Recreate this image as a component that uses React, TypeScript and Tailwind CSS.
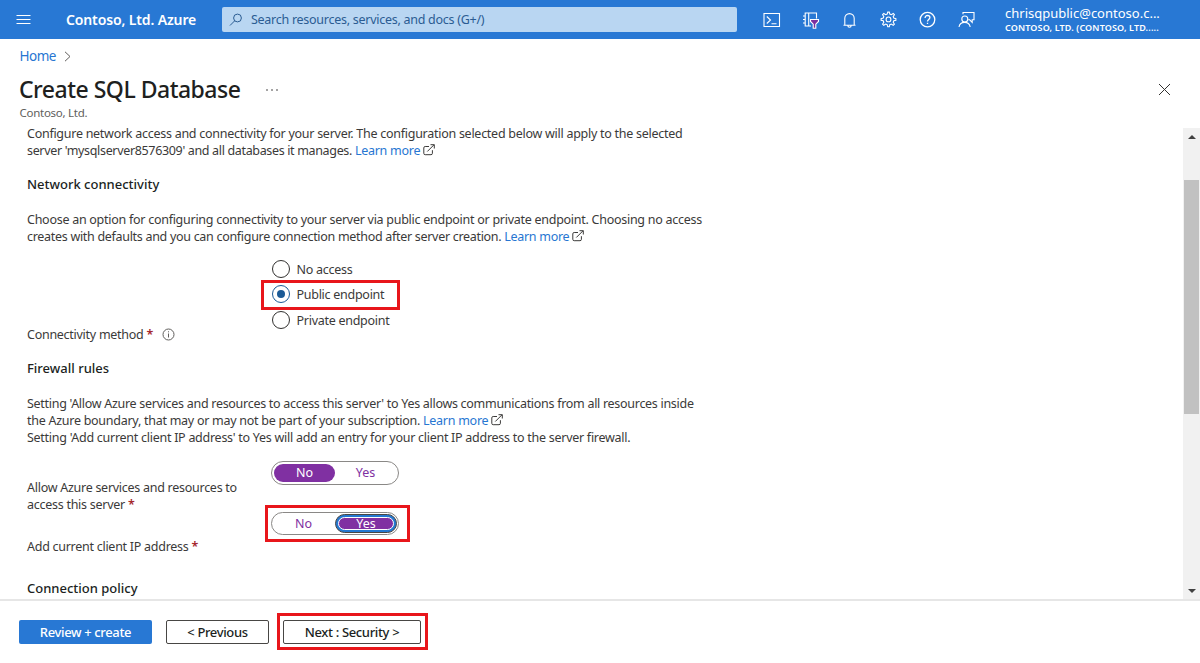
import React from "react";

const RED = "pointer-events-none absolute border-[3px] border-[#e8161b]";

function External() {
  return (
    <svg className="ml-[3px] inline-block h-3 w-3 align-[-1px]" viewBox="0 0 12 12" fill="none" stroke="#3b3a39" strokeWidth="1">
      <path d="M6 2.500H2.200Q.8 2.500.8 3.900v5.400q0 1.400 1.400 1.400H8q1.400 0 1.400-1.400V6.200M4.300 7.500L11 .8M7.500.7H11.300V4.500" />
    </svg>
  );
}

function Learn() {
  return (
    <>
      <a className="text-[#2776d2]">Learn more</a>
      <External />
    </>
  );
}

function Star() {
  return <span className="font-semibold text-[#a4262c]">*</span>;
}

function Radio({ label, checked = false }: { label: string; checked?: boolean }) {
  return (
    <div className="flex h-[25.300px] items-center">
      <span className={checked ? "flex h-[18px] w-[18px] items-center justify-center rounded-full border border-[#1b5a96]" : "h-[18px] w-[18px] rounded-full border border-[#323130]"}>
        {checked && <span className="h-2 w-2 rounded-full bg-[#1b5a96]" />}
      </span>
      <span className="ml-[7px] pt-px">{label}</span>
    </div>
  );
}

function TopIcons() {
  return (
    <div className="flex items-center gap-[19px] text-white">
      <svg className="h-5 w-5" viewBox="0 0 20 20" fill="none" stroke="currentColor" strokeWidth="1.100">
        <path d="M2 3.500h15.500v13H2zM4.800 6.500l3.700 3.500-3.700 3.500M9.500 13.800h5" />
      </svg>
      <svg className="h-5 w-5" viewBox="0 0 20 20" fill="none" stroke="currentColor" strokeWidth="1.100">
        <path d="M10 16H4.200V3H15.500v5.500M7.700 3v13M2 6h2.500M2 9.500h2.500M2 13h2.500" />
        <path d="M9.500 9.500h8v2l-2.700 2.700v4h-2.600v-4L9.500 11.500z" fill="#7b2f9f" />
      </svg>
      <svg className="h-5 w-5" viewBox="0 0 20 20" fill="none" stroke="currentColor" strokeWidth="1.100">
        <path d="M4.800 15V8.300a4.700 4.700 0 0 1 9.400 0V15M3.500 15.200h12M7.800 15.500a1.700 1.700 0 0 0 3.400 0" />
      </svg>
      <svg className="h-5 w-5" viewBox="0 0 20 20" fill="none" stroke="currentColor" strokeWidth="1.100">
        <path d="M8.700 2.100h1.600l.5 2 1.500.6 1.900-1.200 1.200 1.200-1.200 1.900.6 1.500 2.100.5v1.600l-2.100.5-.6 1.500 1.200 1.900-1.200 1.200-1.900-1.200-1.500.6-.5 2H8.700l-.5-2-1.500-.6-1.900 1.200-1.200-1.200 1.200-1.900-.6-1.500-2.100-.5V8.600l2.100-.5.6-1.500-1.200-1.900 1.200-1.200 1.900 1.200 1.500-.6z" />
        <circle cx="9.500" cy="9.400" r="2.400" />
      </svg>
      <svg className="h-5 w-5" viewBox="0 0 20 20" fill="none" stroke="currentColor" strokeWidth="1.300">
        <circle cx="9.500" cy="9.600" r="7.300" />
        <path d="M7.100 7.900c0-1.500 1-2.400 2.400-2.400s2.400.9 2.400 2.100c0 1.800-2.400 1.900-2.400 3.900M9.500 12.800v1.300" />
      </svg>
      <svg className="h-5 w-5" viewBox="0 0 20 20" fill="none" stroke="currentColor" strokeWidth="1.100">
        <circle cx="7.800" cy="9" r="3" />
        <path d="M2 17a5.700 5.700 0 0 1 11.200 0M6 4.300V2.500h11v7.300h-1.800v2.500l-2.500-2.500h-1.500" />
      </svg>
    </div>
  );
}

export default function App() {
  return (
    <div className="flex h-[663px] w-[1200px] flex-col overflow-hidden bg-white font-['Noto_Sans','Open_Sans',sans-serif] text-[12.500px] leading-[17px] tracking-[-0.270px] whitespace-nowrap text-[#3b3a39]">
      <header className="flex h-[39px] shrink-0 items-center bg-[#2878d4] text-white">
        <svg className="ml-4 h-[14px] w-[15px]" viewBox="0 0 15 14" stroke="white" strokeWidth="1">
          <path d="M.5 2.500h14M.5 6.500h14M.5 10.500h14" />
        </svg>
        <span className="ml-[35px] w-[156px] text-[14px] font-semibold tracking-[-0.130px]">Contoso, Ltd. Azure</span>
        <div className="flex h-[25px] w-[515px] items-center rounded-[2px] bg-[#b9d6f2] text-[#2b5c92]">
          <svg className="ml-[7px] h-[14px] w-[14px]" viewBox="0 0 14 14" fill="none" stroke="currentColor">
            <circle cx="8.500" cy="5" r="3.900" />
            <path d="M5.700 7.800L1 12.500" />
          </svg>
          <span className="ml-2">Search resources, services, and docs (G+/)</span>
        </div>
        <div className="ml-[25px]">
          <TopIcons />
        </div>
        <div className="ml-[28px] tracking-normal">
          <div className="text-[13px] leading-[16px]">chrisqpublic@contoso.c...</div>
          <div className="text-[9px] leading-[13px] font-semibold tracking-[0.150px]">CONTOSO, LTD. (CONTOSO, LTD.....</div>
        </div>
      </header>

      <nav className="flex h-[35px] shrink-0 items-center pl-[19.500px] text-[13.500px] text-[#2776d2]">
        <span className="w-[36px] tracking-[-0.500px]">Home</span>
        <svg className="ml-2 h-[11px] w-[7px]" viewBox="0 0 7 11" fill="none" stroke="#605e5c">
          <path d="M1 .8l5 4.700-5 4.700" />
        </svg>
      </nav>
      <div className="flex h-[31px] shrink-0 items-center pl-[19px] text-[#201f1e]">
        <h1 className="w-[247px] text-[23px] font-medium tracking-[-0.500px]">Create SQL Database</h1>
        <svg className="h-1 w-3" viewBox="0 0 12 4" fill="#323130">
          <circle cx="1" cy="2" r=".8" /><circle cx="6" cy="2" r=".8" /><circle cx="11" cy="2" r=".8" />
        </svg>
        <svg className="ml-[880px] h-[13px] w-[13px]" viewBox="0 0 13 13" stroke="#323130" strokeWidth="1">
          <path d="M1 1l11 11M12 1L1 12" />
        </svg>
      </div>
      <div className="h-[20px] shrink-0 pl-[19.500px] text-[11.500px] leading-[16px] text-[#605e5c]">Contoso, Ltd.</div>

      <div className="flex h-[476px] shrink-0 border-b-2 border-[#e6e6e6]">
        <main className="w-[1183px] overflow-hidden pl-[27px]">
          <p className="w-max">Configure network access and connectivity for your server. The configuration selected below will apply to the selected</p>
          <p className="w-max"><span className="tracking-[-0.340px]">server 'mysqlserver8576309' and all databases it manages. </span><Learn /></p>
          <h2 className="mt-[17px] w-max text-[13px] font-medium tracking-normal text-[#201f1e]">Network connectivity</h2>
          <p className="mt-[18px] w-max">Choose an option for configuring connectivity to your server via public endpoint or private endpoint. Choosing no access</p>
          <p className="w-max tracking-[-0.300px]">creates with defaults and you can configure connection method after server creation. <Learn /></p>

          <div className="mt-[12px] flex h-[86px] items-start">
            <div className="flex h-full w-[244.500px] items-end">
              Connectivity method&nbsp;<Star />
              <svg className="mb-[2px] ml-[9px] h-[13px] w-[13px]" viewBox="0 0 13 13" fill="none" stroke="#605e5c">
                <circle cx="6.500" cy="6.500" r="5.500" />
                <path d="M6.500 5.500v4M6.500 3.300v1" />
              </svg>
            </div>
            <div className="relative -mt-[0.500px]">
              <Radio label="No access" />
              <Radio label="Public endpoint" checked />
              <Radio label="Private endpoint" />
              <span className={`${RED} top-[23.500px] left-[-10.500px] h-[30px] w-[139px]`} />
            </div>
          </div>

          <h2 className="mt-[17px] w-max text-[13px] font-medium tracking-normal text-[#201f1e]">Firewall rules</h2>
          <p className="mt-[18px] w-max tracking-[-0.290px]">Setting 'Allow Azure services and resources to access this server' to Yes allows communications from all resources inside</p>
          <p className="w-max">the Azure boundary, that may or may not be part of your subscription. <Learn /></p>
          <p className="w-max">Setting 'Add current client IP address' to Yes will add an entry for your client IP address to the server firewall.</p>

          <div className="mt-[15px] flex h-[51px]">
            <div className="w-[244px] pt-[18px]">
              <p>Allow Azure services and resources to</p>
              <p>access this server <Star /></p>
            </div>
            <div className="flex h-6 w-[128px] rounded-full border border-[#8a8886] p-[2px] text-center leading-[18px] tracking-normal">
              <span className="w-[61px] rounded-full bg-[#8030a2] text-white">No</span>
              <span className="flex-1 text-[#8030a2]">Yes</span>
            </div>
          </div>
          <div className="flex h-[43px]">
            <div className="w-[244px] pt-[26px]">Add current client IP address <Star /></div>
            <div className="relative h-6">
              <div className="flex h-[23px] w-[128px] items-center rounded-full border border-[#8a8886] pr-px text-center leading-[18px] tracking-normal">
                <span className="w-[63px] text-[#8030a2]">No</span>
                <span className="flex h-[19px] w-[62px] items-center rounded-full border border-[#484644] bg-[#2478d0] p-[2px]">
                  <span className="flex h-full w-full items-center justify-center rounded-full border border-white bg-[#8030a2] text-white">Yes</span>
                </span>
              </div>
              <span className={`${RED} top-[-7px] left-[-6px] h-[37px] w-[145px]`} />
            </div>
          </div>
          <h2 className="mt-[25px] w-max text-[13px] font-medium tracking-normal text-[#201f1e]">Connection policy</h2>
        </main>
        <div className="mt-[3px] flex w-[17px] flex-col items-center bg-[#f1f1f1]">
          <svg className="mt-[7px] h-[4px] w-2" viewBox="0 0 8 4"><path d="M0 4L4 0l4 4z" fill="#404040" /></svg>
          <div className="mt-[41px] h-[234px] w-[15px] bg-[#c1c1c1]" />
          <svg className="mt-[175px] h-[4px] w-2" viewBox="0 0 8 4"><path d="M0 0l4 4 4-4z" fill="#404040" /></svg>
        </div>
      </div>

      <footer className="flex pt-[19px] pl-[19px] text-[13px] font-medium tracking-[-0.350px] text-[#201f1e]">
        <button className="h-6 w-[133px] rounded-[2px] bg-[#2878d4] text-white">Review + create</button>
        <button className="ml-[14px] h-6 w-[103px] rounded-[2px] border border-[#484644]">&lt; Previous</button>
        <div className="relative ml-[14px]">
          <button className="h-6 w-[138px] rounded-[2px] border border-[#484644]">Next : Security &gt;</button>
          <span className={`${RED} top-[-7px] left-[-6px] h-[37px] w-[151px]`} />
        </div>
      </footer>
    </div>
  );
}
